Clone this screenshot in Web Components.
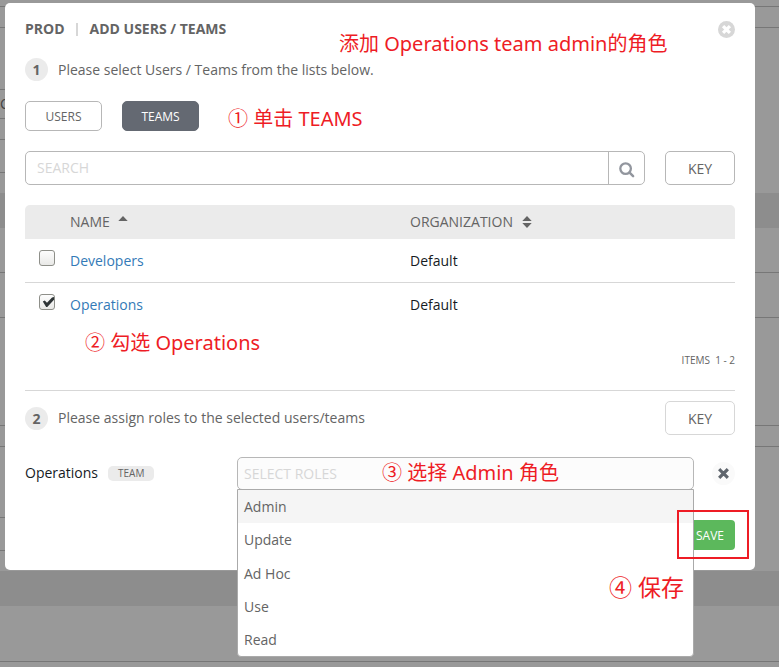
<!DOCTYPE html>
<html lang="zh-CN">
<head>
<meta charset="utf-8">
<title>Add Users / Teams</title>
<style>
html, body { margin: 0; }
body {
  display: grid;
  min-height: 100vh;
  overflow-x: hidden;
  background: #999;
  font: 14px/20px "Open Sans", "Noto Sans CJK SC", sans-serif;
  color: #161b1f;
}
page-backdrop, users-dialog { grid-area: 1 / 1; }
</style>
</head>
<body>
<page-backdrop></page-backdrop>
<users-dialog></users-dialog>

<script>
const define = (name, html, setup) => customElements.define(name, class extends HTMLElement {
  constructor() {
    super();
    const t = document.createElement('template');
    t.innerHTML = html;
    this.attachShadow({ mode: 'open' }).append(t.content.cloneNode(true));
  }
  connectedCallback() { if (setup) setup(this, this.shadowRoot); }
});

/* Dimmed page behind the dialog */
define('page-backdrop', `
<style>
:host { display: flex; flex-direction: column; color: #444; overflow: hidden; height: 100vh; }
div { box-sizing: border-box; flex: none; border-bottom: 1px solid #777; }
.side { width: 20px; }
.h7 { height: 7px; } .h21 { height: 21px; } .h29 { height: 29px; } .h33 { height: 33px; }
.h45 { height: 45px; } .h62 { height: 62px; } .h71 { height: 71px; } .h108 { height: 108px; }
.h56 { height: 56px; }
.gap { height: 20px; border: 0; }
.band { height: 35px; background: #8d8d8d; border: 0; }
.text { line-height: 28px; }
</style>
<div class="h7"></div><div class="h21"></div>
<div class="side h62"></div><div class="side h29 text">C</div><div class="side h21"></div><div class="side h33"></div>
<div class="gap"></div><div class="band"></div>
<div class="h45"></div><div class="h45"></div><div class="h108"></div><div class="h21"></div>
<div class="side h71"></div><div class="side h33"></div>
<div class="gap"></div><div class="band"></div><div class="h56"></div>`);

/* Outlined or filled push button; variant: (none) | active | soft | save */
define('ui-button', `
<style>
:host { display: block; flex: none; }
button {
  box-sizing: border-box; display: block; height: 30px; width: 77px; padding: 2px 0 0;
  border: 1px solid #b7b7b7; border-radius: 5px; background: #fff; color: #646464;
  font: 12px/20px "Open Sans", sans-serif;
}
:host([size=large]) button { width: 70px; height: 34px; font-size: 14px; }
:host([variant=active]) button { background: #646972; border-color: #646972; color: #fff; }
:host([variant=soft]) button { border-color: #d7d7d7; }
:host([variant=save]) button { width: 50px; border: 0; border-radius: 4px; background: #5cb85c; color: #fff; }
</style>
<button type="button"><slot></slot></button>`);

/* Numbered instruction */
define('step-line', `
<style>
:host { display: flex; align-items: center; gap: 10px; color: #646464; }
b {
  width: 23px; height: 23px; border-radius: 50%; background: #ebebeb;
  text-align: center; line-height: 23px;
}
</style>
<b></b><span><slot></slot></span>`, (el, root) => { root.querySelector('b').textContent = el.getAttribute('number'); });

/* Red tutorial caption */
define('red-note', `
<style>
:host { display: block; color: #ee1c25; font: 20px/28px "Noto Sans", "Noto Sans CJK SC", sans-serif; white-space: nowrap; }
</style>
<slot></slot>`);

define('search-bar', `
<style>
:host { display: flex; flex: 1; min-width: 0; box-sizing: border-box; height: 34px; border: 1px solid #b7b7b7; border-radius: 5px; }
input {
  flex: 1; min-width: 0; border: 0; outline: 0; padding: 0 11px; background: none;
  font: 14px/20px "Open Sans", sans-serif; color: #161b1f;
}
input::placeholder { color: #d7d7d7; opacity: 1; }
button { width: 36px; padding: 4px 0 0; border: 0; border-left: 1px solid #b7b7b7; background: none; }
svg { display: block; margin: auto; }
</style>
<input type="search" placeholder="SEARCH" aria-label="Search">
<button type="button" aria-label="Run search"><svg width="16" height="16" viewBox="0 0 16 16" fill="none" stroke="#92969e"><circle cx="6.6" cy="6.6" r="5.3" stroke-width="2.3"/><path d="M10.6 10.6l3.5 3.5" stroke-width="2.5" stroke-linecap="round"/></svg></button>`);

define('team-table', `
<style>
:host { display: block; }
table { width: 100%; table-layout: fixed; border-collapse: separate; border-spacing: 0; }
th, td { box-sizing: border-box; padding: 0; text-align: left; font-weight: 400; }
th { height: 34px; background: #ebebeb; color: #646464; }
th:first-child { width: 45px; border-radius: 5px 0 0 0; }
th:nth-child(2) { width: 340px; }
th:last-child { border-radius: 0 5px 0 0; }
td { height: 44px; }
tr.line td { border-bottom: 1px solid #d7d7d7; }
a { color: #337ab7; text-decoration: none; }
svg { margin-left: 5px; vertical-align: -1px; }
input {
  appearance: none; box-sizing: border-box; display: block; width: 16px; height: 16px;
  margin: 0 0 6px 14px; border: 1px solid #8e8f89; border-radius: 3px;
  background: linear-gradient(#fdfdfd, #e9e9e7);
}
input:checked::before {
  content: ""; display: block; width: 14px; height: 14px; background: #2e3436;
  clip-path: polygon(20% 46%, 34% 40%, 50% 56%, 86% 18%, 100% 14%, 100% 34%, 52% 86%, 44% 86%);
}
.pager { padding: 23px 0 20px; border-bottom: 1px solid #d7d7d7; text-align: right; font-size: 10px; color: #646464; white-space: pre; }
</style>
<table>
<thead><tr><th></th>
<th>NAME <svg width="10" height="12" viewBox="0 0 10 12"><path d="M0.3 5L5 0 9.7 5z" fill="#646464"/></svg></th>
<th>ORGANIZATION <svg width="10" height="12" viewBox="0 0 10 12"><path d="M0.3 5L5 0 9.7 5zM0.3 7L5 12 9.7 7z" fill="#646464"/></svg></th></tr></thead>
<tbody>
<tr class="line"><td><input type="checkbox" aria-label="Developers"></td><td><a href="#developers">Developers</a></td><td>Default</td></tr>
<tr><td><input type="checkbox" aria-label="Operations" checked></td><td><a href="#operations">Operations</a></td><td>Default</td></tr>
</tbody></table>
<div class="pager">ITEMS  1 - 2</div>`);

/* Role text box with its open list of options */
define('role-picker', `
<style>
:host { display: block; flex: 1; position: relative; min-width: 0; }
input {
  box-sizing: border-box; display: block; width: 100%; height: 33px; padding: 0 6px;
  border: 1px solid #b7b7b7; border-radius: 5px; background: #fcfcfc; outline: 0;
  font: 14px/20px "Open Sans", sans-serif;
}
input::placeholder { color: #d7d7d7; opacity: 1; }
ul {
  position: absolute; z-index: 2; top: 32px; left: 0; right: 0; margin: 0; padding: 0;
  list-style: none; border: 1px solid #aaa; border-radius: 0 0 4px 4px; background: #fff; color: #646464;
}
li { padding: 7px 6px 6px; }
li:nth-child(3) { padding-top: 8px; }
li[aria-selected=true] { background: #f5f5f5; }
</style>
<input type="text" role="combobox" aria-expanded="true" aria-controls="roles" aria-label="Select roles" placeholder="SELECT ROLES">
<ul id="roles" role="listbox">
<li role="option" aria-selected="true">Admin</li><li role="option">Update</li><li role="option">Ad Hoc</li><li role="option">Use</li><li role="option">Read</li>
</ul>
<slot></slot>`);

define('role-row', `
<style>
:host { display: flex; align-items: center; }
.who { width: 212px; display: flex; align-items: center; gap: 10px; padding-bottom: 1px; }
.tag { padding: 0 10px; border-radius: 5px; background: #ebebeb; color: #646464; font-size: 10px; line-height: 15px; }
button { flex: none; width: 23px; height: 23px; margin-left: 18px; padding: 0; border: 0; border-radius: 50%; background: #fafafa; }
svg { display: block; margin: auto; }
red-note { position: absolute; left: 145px; top: 2px; }
</style>
<div class="who"><span>Operations</span><span class="tag">TEAM</span></div>
<role-picker><red-note>③ 选择 Admin 角色</red-note></role-picker>
<button type="button" aria-label="Remove"><svg width="11" height="11" viewBox="0 0 11 11"><path d="M2.3 2.3l6.4 6.4M8.7 2.3l-6.4 6.4" stroke="#5f656d" stroke-width="3.2" stroke-linecap="square"/></svg></button>`);

define('users-dialog', `
<style>
:host {
  display: flex; flex-direction: column; align-self: start; position: relative;
  margin: 3px 24px 0 5px; padding: 16px 20px 20px; border-radius: 5px; background: #fff;
}
header { display: flex; align-items: center; color: #646464; font-weight: 700; }
header i { width: 2px; height: 13px; margin: 0 12px 0 11px; background: #d7d7d7; }
header button { margin-left: auto; padding: 0; border: 0; background: none; }
svg { display: block; }
.row { display: flex; gap: 20px; margin-top: 20px; }
.first { margin-top: 19px; }
team-table { margin-top: 20px; }
.second { display: flex; justify-content: space-between; margin-top: 10px; }
role-row { margin-top: 22px; }
footer { display: flex; justify-content: flex-end; margin-top: 30px; }
.over { position: absolute; z-index: 3; }
.title { top: 27px; left: 334px; }
.n1 { top: 102px; left: 223px; }
.n2 { top: 326px; left: 80px; }
.n4 { top: 570px; right: 71px; }
.n4 red-note { font-size: 23px; }
.frame { right: 6px; bottom: 11px; width: 68px; height: 45px; border: 2px solid #ee1c25; }
</style>
<header><span>PROD</span><i></i><span>ADD USERS / TEAMS</span>
<button type="button" aria-label="Close"><svg width="17" height="17" viewBox="0 0 17 17"><circle cx="8.5" cy="8.5" r="8.5" fill="#d7d7d7"/><path d="M6.2 6.2l4.6 4.6M10.8 6.2l-4.6 4.6" stroke="#fff" stroke-width="3.2" stroke-linecap="square"/></svg></button></header>
<step-line class="first" number="1">Please select Users / Teams from the lists below.</step-line>
<div class="row"><ui-button>USERS</ui-button><ui-button variant="active">TEAMS</ui-button></div>
<div class="row"><search-bar></search-bar><ui-button size="large">KEY</ui-button></div>
<team-table></team-table>
<div class="second"><step-line number="2">Please assign roles to the selected users/teams</step-line><ui-button size="large" variant="soft">KEY</ui-button></div>
<role-row></role-row>
<footer><ui-button variant="save">SAVE</ui-button></footer>
<div class="over title"><red-note>添加 Operations team admin的角色</red-note></div>
<div class="over n1"><red-note>① 单击 TEAMS</red-note></div>
<div class="over n2"><red-note>② 勾选 Operations</red-note></div>
<div class="over n4"><red-note>④ 保存</red-note></div>
<div class="over frame"></div>`);
</script>
</body>
</html>
